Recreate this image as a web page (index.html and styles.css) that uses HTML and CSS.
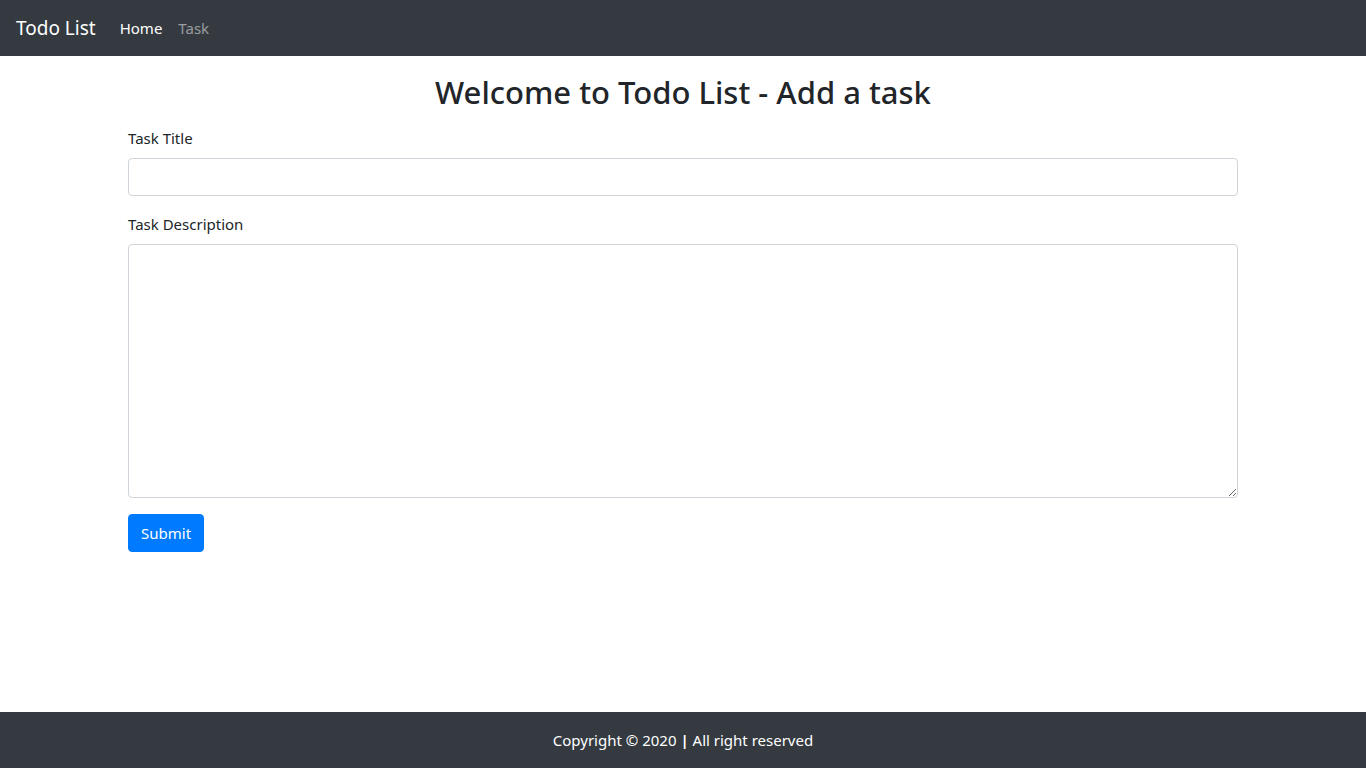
FILE: index.html
```html
<!DOCTYPE html>
<html lang="en">
<head>
<meta charset="utf-8">
<title>Todo List</title>
<link rel="stylesheet" href="styles.css">
</head>
<body>
<nav class="navbar">
  <a class="brand" href="#">Todo List</a>
  <ul class="nav">
    <li><a class="nav-link active" href="#">Home</a></li>
    <li><a class="nav-link" href="#">Task</a></li>
  </ul>
</nav>
<main class="container">
  <h2 class="title">Welcome to Todo List - Add a task</h2>
  <form class="form">
    <div class="form-group">
      <label for="title">Task Title</label>
      <input id="title" class="form-control" type="text">
    </div>
    <div class="form-group">
      <label for="desc">Task Description</label>
      <textarea id="desc" class="form-control textarea"></textarea>
    </div>
    <button type="button" class="btn">Submit</button>
  </form>
</main>
<footer class="footer">Copyright © 2020&nbsp;<b class="sep">|</b>&nbsp;All right reserved</footer>
</body>
</html>
```
FILE: styles.css
```css
* { box-sizing: border-box; }
html, body { margin: 0; padding: 0; }
body {
  font-family: "Noto Sans", "Open Sans", sans-serif;
  font-size: 15px;
  line-height: 24px;
  color: #212529;
  background: #fff;
  min-height: 100vh;
  display: flex;
  flex-direction: column;
}
.navbar {
  background: #343a40;
  height: 56px;
  padding: 8px 16px;
  display: flex;
  align-items: center;
}
.brand {
  font-size: 19px;
  line-height: 30px;
  color: #fff;
  text-decoration: none;
  margin-right: 16px;
}
.nav {
  list-style: none;
  margin: 0;
  padding: 0;
  display: flex;
}
.nav-link {
  display: block;
  padding: 8px;
  color: rgba(255,255,255,.5);
  text-decoration: none;
}
.nav-link.active { color: #fff; }
.container {
  width: 1140px;
  padding: 0 15px;
  margin: 16px auto 0;
}
.title {
  font-size: 31px;
  font-weight: 500;
  line-height: 40px;
  text-align: center;
  margin: 0 0 14px;
}
.form-group { margin-bottom: 16px; }
label {
  display: block;
  margin-bottom: 8px;
  line-height: 24px;
}
.form-control {
  display: block;
  width: 100%;
  height: 38px;
  padding: 6px 12px;
  font: inherit;
  color: #495057;
  border: 1px solid #ced4da;
  border-radius: 4px;
  background: #fff;
}
.textarea { height: 254px; resize: vertical; }
.btn {
  font: inherit;
  color: #fff;
  background: #007bff;
  border: 1px solid #007bff;
  border-radius: 4px;
  padding: 6px 12px;
  height: 38px;
  line-height: 24px;
  cursor: pointer;
}
.footer {
  margin-top: auto;
  background: #343a40;
  color: #fff;
  height: 56px;
  display: flex;
  align-items: center;
  justify-content: center;
}
.sep { font-weight: 700; }
```
